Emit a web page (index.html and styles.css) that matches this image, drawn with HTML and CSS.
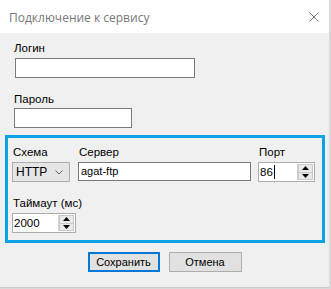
FILE: index.html
```html
<!DOCTYPE html>
<html lang="ru">
<head>
    <meta charset="UTF-8">
    <meta name="viewport" content="width=device-width, initial-scale=1.0">
    <title>Подключение к сервису</title>
    <link rel="stylesheet" href="styles.css">
</head>
<body>
    <div class="window">
        <div class="titlebar">
            <span class="title">Подключение к сервису</span>
            <svg class="close" width="10" height="10" viewBox="0 0 10 10">
                <path d="M0.5 0.5 L9.5 9.5 M9.5 0.5 L0.5 9.5" stroke="#7a7a7a" stroke-width="1" fill="none"/>
            </svg>
        </div>

        <div class="content">
            <div class="field field-login">
                <label>Логин</label>
                <div class="textbox login-box"></div>
            </div>

            <div class="field field-pass">
                <label>Пароль</label>
                <div class="textbox pass-box"></div>
            </div>

            <div class="group">
                <div class="group-row">
                    <div class="field">
                        <label>Схема</label>
                        <div class="combo">
                            <span>HTTP</span>
                            <svg width="8" height="5" viewBox="0 0 8 5">
                                <path d="M0.5 0.5 L4 4 L7.5 0.5" stroke="#606060" fill="none"/>
                            </svg>
                        </div>
                    </div>
                    <div class="field field-server">
                        <label>Сервер</label>
                        <div class="textbox server-box">agat-ftp</div>
                    </div>
                    <div class="field field-port">
                        <label>Порт</label>
                        <div class="numeric port-box">
                            <span class="value">86<span class="caret"></span></span>
                            <div class="spin">
                                <div class="spin-btn">
                                    <svg width="7" height="4" viewBox="0 0 7 4"><path d="M0 4 L3.5 0 L7 4 Z" fill="#000"/></svg>
                                </div>
                                <div class="spin-btn">
                                    <svg width="7" height="4" viewBox="0 0 7 4"><path d="M0 0 L3.5 4 L7 0 Z" fill="#000"/></svg>
                                </div>
                            </div>
                        </div>
                    </div>
                </div>

                <div class="field field-timeout">
                    <label>Таймаут (мс)</label>
                    <div class="numeric timeout-box">
                        <span class="value">2000</span>
                        <div class="spin">
                            <div class="spin-btn">
                                <svg width="7" height="4" viewBox="0 0 7 4"><path d="M0 4 L3.5 0 L7 4 Z" fill="#000"/></svg>
                            </div>
                            <div class="spin-btn">
                                <svg width="7" height="4" viewBox="0 0 7 4"><path d="M0 0 L3.5 4 L7 0 Z" fill="#000"/></svg>
                            </div>
                        </div>
                    </div>
                </div>
            </div>

            <div class="buttons">
                <div class="btn btn-default">Сохранить</div>
                <div class="btn">Отмена</div>
            </div>
        </div>
    </div>
</body>
</html>
```

FILE: styles.css
```css
body {
    margin: 0;
    background: #dadada;
    font-family: "Liberation Sans", Arial, sans-serif;
    font-size: 11px;
    color: #000;
}

.window {
    width: 329px;
    height: 287px;
    background: #f0f0f0;
    border-bottom: 1px solid #c8c8c8;
}

.titlebar {
    height: 33px;
    background: #fff;
    display: flex;
    align-items: center;
    justify-content: space-between;
    padding: 0 10px 0 9px;
}

.title {
    font-family: "Open Sans", "Noto Sans", sans-serif;
    font-size: 12px;
    color: #777;
    margin-top: 1px;
}

.close {
    display: block;
    margin-top: 1px;
}

.content {
    padding: 9px 0 0 14px;
}

.field {
    display: flex;
    flex-direction: column;
}

.field label {
    display: block;
    font-size: 11.5px;
    line-height: 12px;
    height: 12px;
    margin-bottom: 4px;
}

.field-pass {
    margin-top: 15px;
}

.field-pass label {
    margin-bottom: 3px;
}

.textbox {
    height: 20px;
    box-sizing: border-box;
    background: #fff;
    border: 1px solid #7a7a7a;
    line-height: 18px;
    padding-left: 2px;
}

.login-box {
    width: 180px;
    margin-left: 1px;
}

.pass-box {
    width: 118px;
}

.group {
    margin: 7px 0 0 -9px;
    width: 320px;
    height: 108px;
    box-sizing: border-box;
    border: 3px solid #0ea2e6;
    padding: 8px 0 0 4px;
}

.group-row {
    display: flex;
}

.group .field label {
    padding-left: 1px;
}

.combo {
    width: 58px;
    height: 20px;
    box-sizing: border-box;
    background: #e5e5e5;
    border: 1px solid #acacac;
    display: flex;
    align-items: center;
    justify-content: space-between;
    padding: 0 6px 0 3px;
    font-size: 12px;
}

.field-server {
    margin-left: 8px;
}

.server-box {
    width: 173px;
    height: 19px;
    line-height: 17px;
    font-size: 11px;
}

.field-port {
    margin-left: 7px;
}

.field-port label {
    padding-left: 0;
}

.numeric {
    height: 20px;
    box-sizing: border-box;
    background: #fff;
    border: 1px solid #acacac;
    display: flex;
    align-items: center;
    justify-content: space-between;
    padding: 0 1px 0 1px;
    font-size: 11.5px;
}

.port-box {
    width: 57px;
}

.timeout-box {
    width: 64px;
}

.value {
    display: flex;
    align-items: center;
}

.caret {
    display: inline-block;
    width: 1px;
    height: 14px;
    background: #000;
    margin-left: 1px;
}

.spin {
    width: 15px;
    height: 16px;
    display: flex;
    flex-direction: column;
    border-left: 1px solid #d0d0d0;
}

.spin-btn {
    flex: 1;
    display: flex;
    align-items: center;
    justify-content: center;
    background: #e9e9e9;
    border: 1px solid #c9c9c9;
}

.spin-btn + .spin-btn {
    border-top: none;
}

.spin-btn svg {
    display: block;
}

.field-timeout {
    margin-top: 15px;
}

.buttons {
    display: flex;
    gap: 9px;
    justify-content: center;
    margin: 9px 0 0 -14px;
}

.btn {
    width: 73px;
    height: 20px;
    box-sizing: border-box;
    background: #e1e1e1;
    border: 1px solid #adadad;
    display: flex;
    align-items: center;
    justify-content: center;
    font-size: 11px;
}

.btn-default {
    width: 72px;
    border: 2px solid #0078d7;
}
```
